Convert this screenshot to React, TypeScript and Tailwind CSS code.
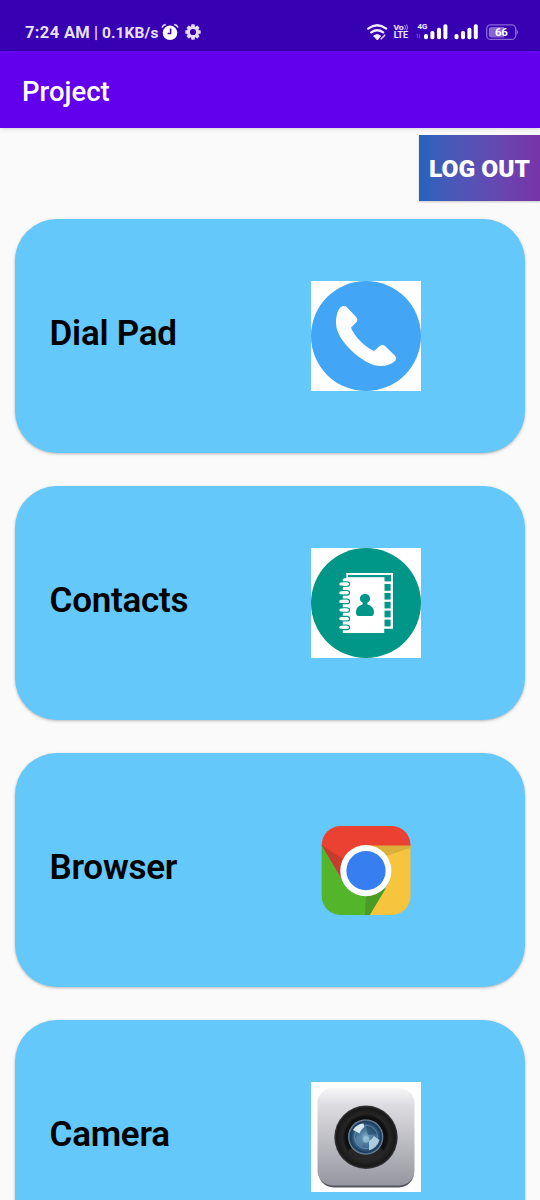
import type { ReactNode } from "react";

function AlarmIcon() {
  return (
    <svg className="h-[18px] w-[18px]" viewBox="0 0 18 18" fill="none">
      <circle cx="9" cy="9.8" r="7.3" fill="#fff" />
      <path d="M1 4.4 Q2 1.8 4.8 1.4 M17 4.4 Q16 1.8 13.2 1.4" stroke="#f1eafa" strokeWidth="1.5" />
      <path d="M9.6 5.6v4.8H6.6" stroke="#3700b3" strokeWidth="1.5" />
    </svg>
  );
}

function GearIcon() {
  return (
    <svg className="h-4 w-4" viewBox="0 0 16 16">
      <g fill="#e6dcf6">
        {[0, 45, 90, 135].map((a) => (
          <rect key={a} x="6.2" y="0.3" width="3.6" height="15.4" rx="0.6" transform={`rotate(${a} 8 8)`} />
        ))}
        <circle cx="8" cy="8" r="6.1" />
      </g>
      <circle cx="8" cy="8" r="3.1" fill="#3700b3" />
    </svg>
  );
}

function StatusIcons() {
  return (
    <svg className="h-[50px] w-[185px]" viewBox="0 0 185 50">
      <g fill="none" stroke="#f1eafa" strokeWidth="2.3" strokeLinecap="round">
        <path d="M13.2 18.6 Q22.2 12 31.2 18.6" />
        <path d="M16.2 22.4 Q22.2 18 28.2 22.4" />
      </g>
      <path d="M18.6 25.9 Q22.2 23.3 25.6 25.9 L22.4 30z" fill="#f1eafa" stroke="#f1eafa" strokeLinejoin="round" />
      <path d="M26.2 28.8l3.6-3.6" stroke="#d9cdf2" strokeWidth="1.6" strokeLinecap="round" fill="none" />
      <g fill="#efe8fa" stroke="#efe8fa" strokeWidth="0.15" fontFamily="Roboto, sans-serif" fontWeight="600">
        <text x="38.4" y="20.2" fontSize="7.6" textLength="10.4" lengthAdjust="spacingAndGlyphs">Vo</text>
        <text x="38.7" y="28" fontSize="8.2" textLength="14.4" lengthAdjust="spacingAndGlyphs">LTE</text>
        <text x="62.5" y="19.3" fontSize="7.6" textLength="9.7" lengthAdjust="spacingAndGlyphs">4G</text>
      </g>
      <path d="M49.8 15.2q1.5 2.3 0 4.6M51.6 14.5q2 3 0 6" stroke="#cbbcee" strokeWidth="0.8" fill="none" />
      <path d="M62.4 28v-4.2l-.8 1M64.4 23.8V28l.8-1" stroke="#8f6ad6" strokeWidth="0.6" fill="none" />
      <g fill="#fff">
        <rect x="69" y="24" width="4" height="5.2" rx="1.8" />
        <rect x="75.4" y="21" width="4" height="8.2" rx="1.8" />
        <rect x="82" y="17.7" width="4" height="11.5" rx="1.8" />
        <rect x="88.4" y="14.3" width="4" height="14.9" rx="1.8" />
        <rect x="99.5" y="24" width="4" height="5.2" rx="1.8" />
        <rect x="106" y="21" width="4" height="8.2" rx="1.8" />
        <rect x="112.4" y="17.7" width="4" height="11.5" rx="1.8" />
        <rect x="118.8" y="14.3" width="4" height="14.9" rx="1.8" />
      </g>
      <rect x="131.7" y="14.8" width="29" height="14.6" rx="4" fill="none" stroke="#8968d5" strokeWidth="1.3" />
      <path d="M161.5 19.2q3.2 2.8 0 5.8z" fill="#8968d5" />
      <path d="M136.5 17h12.5v10.5h-12.5q-2.7 0-2.7-2.7v-5.1q0-2.7 2.7-2.7z" fill="#8766d3" />
      <text x="140" y="26.4" fontSize="11.5" fontWeight="700" fontFamily="Roboto, sans-serif" fill="#fff" textLength="12.8">66</text>
    </svg>
  );
}

function PhoneArt() {
  return (
    <svg className="h-[110px] w-[110px] bg-white" viewBox="0 0 110 110">
      <circle cx="55" cy="55" r="55" fill="#42a5f5" />
      <path
        d="M29.6 26.2 Q33 23.8 36 26.3 L45.3 36.3 Q47.5 39 45 41.6 L40 46.7 C43.5 55.5 54 66 63 70 L69 64.8 Q71.5 63 74 65 L84 74.7 Q86 77 84.3 79.5 C80 84 74 85 69.7 84.9 C62 85 55 81 48 76 C36 67 25.5 54 25 43 C24.8 35.5 26.5 29 29.6 26.2z"
        fill="#fff"
      />
    </svg>
  );
}

function ContactsArt() {
  return (
    <svg className="h-[110px] w-[110px] bg-white" viewBox="0 0 110 110">
      <circle cx="55" cy="55" r="55" fill="#009688" />
      <path d="M35.3 25 H82 V80.7 H73 V32 H35.3z" fill="#fff" />
      <g fill="#009688">
        <rect x="37" y="27" width="43" height="2.2" />
        <rect x="73.4" y="27.6" width="6.6" height="5.8" />
        <rect x="73.4" y="36" width="6.2" height="6.8" />
        <rect x="73.4" y="45" width="6.2" height="6.6" />
        <rect x="73.4" y="53.8" width="6.2" height="6.6" />
        <rect x="73.4" y="62.6" width="6.2" height="6.8" />
        <rect x="73.4" y="71.6" width="6.2" height="6.8" />
      </g>
      <path d="M33 30.2h40.2v54.8H31.8V31.4z" fill="#fff" />
      {[36, 44.7, 53.3, 61.9, 70.6, 79.2].map((y) => (
        <g key={y}>
          <path d={`M27 ${y - 2.1}h8.8q2.7 0 2.7 2.2t-2.7 2.2H27`} fill="none" stroke="#009688" strokeWidth="1.3" />
          <rect x="28.3" y={y - 1.5} width="9.4" height="3.1" rx="1.5" fill="#fff" />
        </g>
      ))}
      <path d="M45 63.5 Q45.4 57.8 51.6 56.4 V54.8 Q48.8 53.5 48.8 50.8 Q49.2 46 54 46 Q58.8 46 59.2 50.8 Q59.2 53.5 56.4 54.8 V56.4 Q62.8 58 63 63.7 Q63 67.8 60.6 68 H47.4 Q44.8 67.8 45 63.5z" fill="#009688" />
    </svg>
  );
}

function BrowserArt() {
  return (
    <svg className="h-[110px] w-[110px]" viewBox="0 0 110 110">
      <defs>
        <clipPath id="browser-tile">
          <rect x="10.7" y="11" width="88.8" height="89" rx="19" />
        </clipPath>
      </defs>
      <g clipPath="url(#browser-tile)">
        <path d="M10 11h90v20H56L31 62 10 31z" fill="#eb4132" />
        <path d="M10 29 L31 65 55 78 74 75 59 100H10z" fill="#53b52a" />
        <path d="M55 30.7h45v70H58L78 67z" fill="#f6c53d" />
        <path d="M10.7 30 L38 48 31 65z" fill="#c53c2d" />
        <path d="M55 30.7h45v2L72 42z" fill="#dbb03a" />
        <path d="M55 79 L75 73 58.8 100H54z" fill="#4a9b25" />
      </g>
      <circle cx="54.8" cy="55.7" r="25.6" fill="#fff" />
      <circle cx="55" cy="55.7" r="19.6" fill="#377ff0" />
    </svg>
  );
}

function CameraArt() {
  return (
    <svg className="h-[110px] w-[110px] bg-white" viewBox="0 0 110 110">
      <defs>
        <linearGradient id="camera-body" x1="0" y1="0" x2="0" y2="1">
          <stop offset="0" stopColor="#f7f7f8" />
          <stop offset=".18" stopColor="#dcdce0" />
          <stop offset="1" stopColor="#9696a0" />
        </linearGradient>
        <radialGradient id="camera-ring">
          <stop offset="0" stopColor="#080808" />
          <stop offset=".66" stopColor="#101010" />
          <stop offset=".74" stopColor="#262626" />
          <stop offset=".93" stopColor="#181818" />
          <stop offset="1" stopColor="#3c3c3e" />
        </radialGradient>
        <radialGradient id="camera-glass">
          <stop offset="0" stopColor="#8bb6d4" />
          <stop offset=".3" stopColor="#54829f" />
          <stop offset=".65" stopColor="#3b678c" />
          <stop offset=".88" stopColor="#1c3a58" />
          <stop offset="1" stopColor="#819db4" />
        </radialGradient>
      </defs>
      <rect x="7.5" y="9" width="95.5" height="96.5" rx="15" fill="#55555c" />
      <rect x="6.5" y="6" width="97" height="97.5" rx="15" fill="url(#camera-body)" />
      <circle cx="55" cy="55.3" r="31.7" fill="url(#camera-ring)" />
      <ellipse cx="55" cy="71" rx="18" ry="8" fill="#262626" />
      <circle cx="54.7" cy="55" r="17.6" fill="url(#camera-glass)" />
      <circle cx="55" cy="55" r="11.5" fill="none" stroke="#6892b2" strokeWidth="0.8" />
      <path d="M42 48 Q45.5 42 52.5 41.5 L53.3 45 Q49 48.5 48.5 51.5z" fill="#d8e9f3" />
      <path d="M58 59 Q61.5 57 63 54 L68.5 58 Q66 66 58 68.5z" fill="#c0dceb" opacity=".85" />
      <path d="M43 57 Q46 62 51 65 L53 58 48 53z" fill="#628bad" opacity=".6" />
      <path d="M55 44 Q62 43 66 52 L57 53z" fill="#1c3e61" opacity=".55" />
      <circle cx="55" cy="57.5" r="3.3" fill="#a8cfe4" opacity=".6" />
    </svg>
  );
}

function LauncherCard({ label, children }: { label: string; children: ReactNode }) {
  return (
    <button className="flex h-[234px] w-full shrink-0 items-center rounded-[42px] bg-[#64c8fa] pl-[34.5px] text-left shadow-[0_1px_3px_rgba(0,0,0,0.28)]">
      <span className="w-[261.5px] pb-[5px] text-[35px] leading-[42px] font-semibold tracking-[-0.25px] whitespace-nowrap text-black">{label}</span>
      {children}
    </button>
  );
}

export default function App() {
  return (
    <div className="flex h-[1200px] w-full flex-col overflow-hidden bg-[#fafafa] font-[Roboto,sans-serif]">
      <div className="flex h-[51px] shrink-0 bg-[#3700b3] text-[#e9e0f8]">
        <div className="flex h-[51px] w-[355px] items-center pt-[13px] pl-[25px]">
          <span className="w-[69px] pt-[2px] text-[16.5px] font-bold tracking-[0.35px] whitespace-nowrap">7:24 AM</span>
          <span className="w-2 pt-px text-[16px] font-medium">|</span>
          <span className="w-[59px] pt-[3px] text-[15.5px] font-bold tracking-[0.1px] whitespace-nowrap">0.1KB/s</span>
          <AlarmIcon />
          <span className="w-1.5" />
          <GearIcon />
        </div>
        <div className="pt-[10px]">
          <StatusIcons />
        </div>
      </div>
      <header className="z-10 flex h-[77px] shrink-0 items-center bg-[#6200ee] pt-[5px] pl-[22px] shadow-[0_1px_4px_rgba(0,0,0,0.16)]">
        <h1 className="text-[27.5px] font-medium text-white">Project</h1>
      </header>
      <main className="flex flex-col">
        <div className="flex h-[91px] shrink-0 justify-end pt-[7px]">
          <button className="flex h-[66px] w-[121px] items-center justify-center bg-linear-to-r from-[#2463bd] to-[#7833a9] pt-[3px] text-[24.5px] font-black whitespace-nowrap text-white shadow-[0_1px_2px_rgba(0,0,0,0.2)]">
            LOG OUT
          </button>
        </div>
        <div className="flex flex-col gap-[33px] px-[15px]">
          <LauncherCard label="Dial Pad"><PhoneArt /></LauncherCard>
          <LauncherCard label="Contacts"><ContactsArt /></LauncherCard>
          <LauncherCard label="Browser"><BrowserArt /></LauncherCard>
          <LauncherCard label="Camera"><CameraArt /></LauncherCard>
        </div>
      </main>
    </div>
  );
}
